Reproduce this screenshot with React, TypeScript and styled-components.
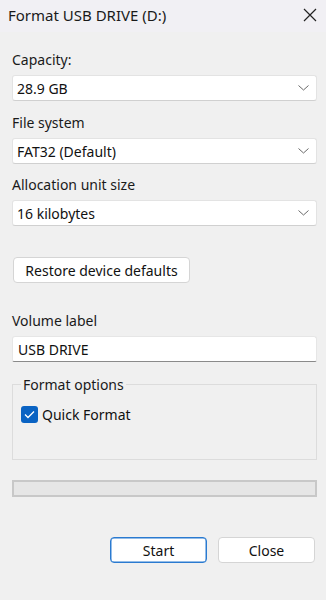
import React from "react";
import styled, { createGlobalStyle } from "styled-components";

const Global = createGlobalStyle`
  html, body { margin: 0; padding: 0; background: #f0f0f0; }
  body { font-family: "Noto Sans", "Open Sans", sans-serif; color: #1b1b1b; }
  * { box-sizing: border-box; }
`;

const Window = styled.div`
  width: 326px;
  height: 600px;
  background: #f0f0f0;
  display: flex;
  flex-direction: column;
`;

const TitleBar = styled.div`
  height: 32px;
  display: flex;
  align-items: center;
  justify-content: space-between;
  padding: 0 8px 2px 8px;
  background: #f1f0f4;
`;

const Title = styled.div`
  font-size: 15px;
  color: #1a1a1a;
`;

const CloseX = styled.svg`
  width: 14px;
  height: 14px;
  margin-right: 1px;
`;

const Body = styled.div`
  display: flex;
  flex-direction: column;
  padding: 19px 9px 0 12px;
`;

const Label = styled.div<{ $mt?: number }>`
  font-size: 14px;
  line-height: 18px;
  margin-top: ${(p) => p.$mt ?? 0}px;
  margin-bottom: 6px;
  color: #1a1a1a;
`;

const Select = styled.div`
  height: 26px;
  background: #fff;
  border: 1px solid #e3e3e3;
  border-bottom-color: #d0d0d0;
  border-radius: 3px;
  display: flex;
  align-items: center;
  justify-content: space-between;
  padding: 0 7px 0 4px;
  font-size: 14px;
  color: #111;
`;

const Chevron = () => (
  <svg width="11" height="6" viewBox="0 0 11 6">
    <path d="M0.5 0.5 L5.5 5 L10.5 0.5" fill="none" stroke="#6a6a6a" strokeWidth="1" />
  </svg>
);

const Button = styled.button<{ $primary?: boolean }>`
  height: 26px;
  background: #fff;
  border: 1px solid ${(p) => (p.$primary ? "#2a7ad0" : "#d5d5d5")};
  box-shadow: ${(p) => (p.$primary ? "inset 0 0 0 0.5px #2a7ad0" : "none")};
  border-radius: 4px;
  font-family: inherit;
  font-size: 14px;
  color: #111;
  padding: 0 8px;
  cursor: default;
`;

const RestoreButton = styled(Button)`
  align-self: flex-start;
  width: 177px;
  margin-top: 31px;
  margin-left: 1px;
`;

const Input = styled.div`
  height: 26px;
  background: #fff;
  border: 1px solid #e6e6e6;
  border-bottom: 1px solid #8a8a8a;
  border-radius: 3px 3px 2px 2px;
  display: flex;
  align-items: center;
  padding: 0 5px;
  font-size: 14px;
  color: #111;
`;

const Group = styled.fieldset`
  margin: 13px 0 0 0;
  padding: 11px 8px 0 8px;
  height: 85px;
  border: 1px solid #dcdcdc;
  border-radius: 0;
`;

const Legend = styled.legend`
  font-size: 14px;
  padding: 0 2px;
  color: #1a1a1a;
`;

const CheckRow = styled.label`
  display: flex;
  align-items: center;
  gap: 4px;
  font-size: 14px;
  color: #111;
`;

const CheckBox = styled.span`
  width: 17px;
  height: 17px;
  border-radius: 3px;
  background: #0a63c3;
  display: inline-flex;
  align-items: center;
  justify-content: center;
`;

const Progress = styled.div`
  margin-top: 20px;
  height: 17px;
  border: 2px solid #c8c8c8;
  background: #e6e6e6;
`;

const Footer = styled.div`
  display: flex;
  justify-content: flex-end;
  gap: 11px;
  margin-top: 40px;
  padding-right: 2px;
`;

const FooterButton = styled(Button)`
  width: 97px;
`;

export default function App() {
  return (
    <Window>
      <Global />
      <TitleBar>
        <Title>Format USB DRIVE (D:)</Title>
        <CloseX viewBox="0 0 14 14">
          <path d="M1 1 L13 13 M13 1 L1 13" stroke="#222" strokeWidth="1.2" />
        </CloseX>
      </TitleBar>
      <Body>
        <Label>Capacity:</Label>
        <Select>
          <span>28.9 GB</span>
          <Chevron />
        </Select>
        <Label $mt={13}>File system</Label>
        <Select>
          <span>FAT32 (Default)</span>
          <Chevron />
        </Select>
        <Label $mt={12}>Allocation unit size</Label>
        <Select>
          <span>16 kilobytes</span>
          <Chevron />
        </Select>
        <RestoreButton>Restore device defaults</RestoreButton>
        <Label $mt={29}>Volume label</Label>
        <Input>USB DRIVE</Input>
        <Group>
          <Legend>Format options</Legend>
          <CheckRow>
            <CheckBox>
              <svg width="11" height="9" viewBox="0 0 11 9">
                <path d="M1 4.5 L4 7.5 L10 1.5" fill="none" stroke="#fff" strokeWidth="1.3" />
              </svg>
            </CheckBox>
            Quick Format
          </CheckRow>
        </Group>
        <Progress />
        <Footer>
          <FooterButton $primary>Start</FooterButton>
          <FooterButton>Close</FooterButton>
        </Footer>
      </Body>
    </Window>
  );
}
